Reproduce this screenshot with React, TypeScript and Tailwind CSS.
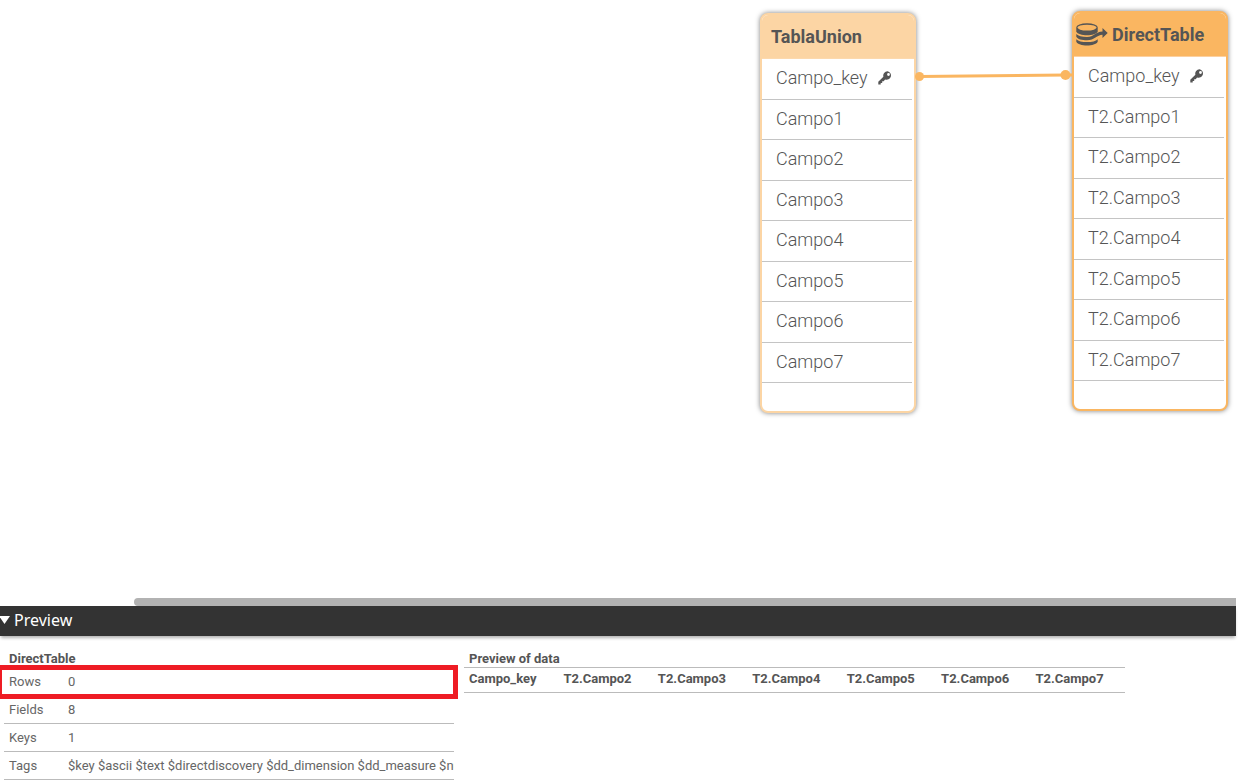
import React, { useState } from "react";

type TableNode = {
   name: string;
   direct: boolean;
   fields: string[];
   place: string;
   border: string;
   header: string;
};

const nodes: TableNode[] = [
   {
      name: "TablaUnion",
      direct: false,
      fields: ["Campo_key", "Campo1", "Campo2", "Campo3", "Campo4", "Campo5", "Campo6", "Campo7"],
      place: "left-[760px] top-[13px]",
      border: "border-[#fcd5a4]",
      header: "bg-[#fcd5a4] border-[#fcd9ae]",
   },
   {
      name: "DirectTable",
      direct: true,
      fields: ["Campo_key", "T2.Campo1", "T2.Campo2", "T2.Campo3", "T2.Campo4", "T2.Campo5", "T2.Campo6", "T2.Campo7"],
      place: "left-[1072px] top-[11px]",
      border: "border-[#fab661]",
      header: "bg-[#fab661] border-[#fcd0a0]",
   },
];

const info = [
   { label: "Rows", value: "0" },
   { label: "Fields", value: "8" },
   { label: "Keys", value: "1" },
   { label: "Tags", value: "$key $ascii $text $directdiscovery $dd_dimension $dd_measure $numeric" },
];

const columns = ["Campo_key", "T2.Campo2", "T2.Campo3", "T2.Campo4", "T2.Campo5", "T2.Campo6", "T2.Campo7"];

function KeyIcon() {
   return (
      <svg className="w-[14px] h-[14px] shrink-0" viewBox="0 0 14 14" fill="#555" aria-hidden="true">
         <path
            fillRule="evenodd"
            d="M9.6 0.2a4.3 4.3 0 0 0-4.2 5.5L0.3 10.8v2.8h2.4v-1.7h1.5v-1.6h1.5l1.4-1.9a4.3 4.3 0 1 0 2.5-8.2zM10.5 2.1a1.4 1.4 0 1 1 0 2.8a1.4 1.4 0 0 1 0-2.8z"
         />
      </svg>
   );
}

function DirectIcon() {
   return (
      <svg className="w-[32px] h-[23px] shrink-0" viewBox="0 0 32 23" aria-hidden="true">
         <path d="M0.3 4.500v4c1.200 2.600 5.600 3.700 10.700 3.700s9.500-1.100 10.700-3.700v-4z" fill="#555" />
         <ellipse cx="11" cy="4.300" rx="10.700" ry="4.100" fill="#555" />
         <ellipse cx="11" cy="4.600" rx="9.600" ry="2.900" fill="#fab661" />
         <path d="M0.300 11c1.800 2 5.700 2.900 10.700 2.900c7 0 8.500-5.300 15.500-5.500V5l5.200 5l-5.200 5v-3.300c-5.500 0.200-8 5.500-15.500 5.500c-5.100 0-9.500-1.100-10.700-3.500z" fill="#555" />
         <path d="M0.300 16.200c1.800 2 5.700 2.900 10.700 2.900s8.900-0.900 10.700-2.900v2.500c-1.500 2.600-5.600 3.700-10.700 3.700s-9.200-1.100-10.700-3.700z" fill="#555" />
      </svg>
   );
}

function ModelTable({ node }: { node: TableNode }) {
   return (
      <section className={`absolute ${node.place} ${node.border} flex flex-col w-[156px] h-[400px] border-2 rounded-lg bg-white shadow-[0_0_5px_rgba(0,0,0,0.5)] overflow-hidden`}>
         <h2 className={`${node.header} flex items-center gap-1 h-[44px] shrink-0 border-b text-[18px] font-bold whitespace-nowrap ${node.direct ? "pl-[2px]" : "pl-[9px]"}`}>
            {node.direct && <DirectIcon />}
            {node.name}
         </h2>
         <ul className="flex flex-col flex-1 mb-[28px] mr-[2px]">
            {node.fields.map((field, i) => (
               <li key={field} className="flex flex-1 items-center gap-[10px] pl-[14px] pb-[2px] border-b border-[#c4c4c4] text-[18px] font-light">
                  {field}
                  {i === 0 && <KeyIcon />}
               </li>
            ))}
         </ul>
      </section>
   );
}

export default function App() {
   const [open, setOpen] = useState(true);

   return (
      <div className="flex flex-col h-screen overflow-hidden bg-white text-[#555] font-['Roboto',sans-serif]">
         {/* Data model canvas */}
         <main className="relative flex-1 overflow-hidden">
            {nodes.map(node => (
               <ModelTable key={node.name} node={node} />
            ))}
            <svg className="absolute left-[915px] top-[68px] w-[160px] h-[16px]" viewBox="0 0 160 16" aria-hidden="true">
               <path d="M4 8.500L151 7L157 7" stroke="#fab661" strokeWidth="3" fill="none" />
               <circle cx="4.500" cy="8.500" r="4.500" fill="#fab661" />
               <circle cx="150.500" cy="7" r="5" fill="#fab661" />
            </svg>
         </main>

         <div className="h-[8px] shrink-0 ml-[134px] mr-4 rounded-l bg-[#b2b2b2]" />

         <div className="shrink-0 mr-4">
            <button
               type="button"
               className="flex items-center gap-1 w-full h-[30px] pb-[2px] bg-[#333] text-white text-[16px] font-['Noto_Sans',sans-serif] shadow-[0_3px_3px_-1px_rgba(0,0,0,0.3)]"
               aria-expanded={open}
               onClick={() => setOpen(!open)}
            >
               <svg className="w-[10px] h-[8px]" viewBox="0 0 10 8" fill="#fff" aria-hidden="true">
                  <path d="M-1 0H10L4.500 8z" />
               </svg>
               Preview
            </button>
         </div>

         {open && (
            <div className="flex items-start gap-[10px] h-[146px] shrink-0 pl-1 pt-[12px] text-[13px]">
               <div className="relative w-[450px]">
                  <table className="w-full table-fixed border-collapse">
                     <caption className="h-[19px] pl-[5px] text-left font-bold leading-[22px]">DirectTable</caption>
                     <tbody>
                        {info.map(row => (
                           <tr key={row.label} className="h-[28px] border-b border-[#bbb]">
                              <th scope="row" className="w-[64px] pt-[2px] pl-[5px] text-left font-normal text-[#666]">{row.label}</th>
                              <td className="pt-[2px] overflow-hidden whitespace-nowrap text-[#666]">{row.value}</td>
                           </tr>
                        ))}
                     </tbody>
                  </table>
                  {/* Marks the empty row count */}
                  <div className="absolute -left-[7px] -right-1 top-[17px] h-[34px] border-[5px] border-[#ee1c24]" />
               </div>
               <table className="w-[661px] table-fixed border-collapse">
                  <caption className="h-[19px] pl-[5px] text-left font-bold leading-[22px]">Preview of data</caption>
                  <thead>
                     <tr className="h-[25px] border-y border-[#bbb]">
                        {columns.map(col => (
                           <th key={col} scope="col" className="pl-[5px] pb-[2px] text-left font-bold leading-[20px]">{col}</th>
                        ))}
                     </tr>
                  </thead>
               </table>
            </div>
         )}
      </div>
   );
}
